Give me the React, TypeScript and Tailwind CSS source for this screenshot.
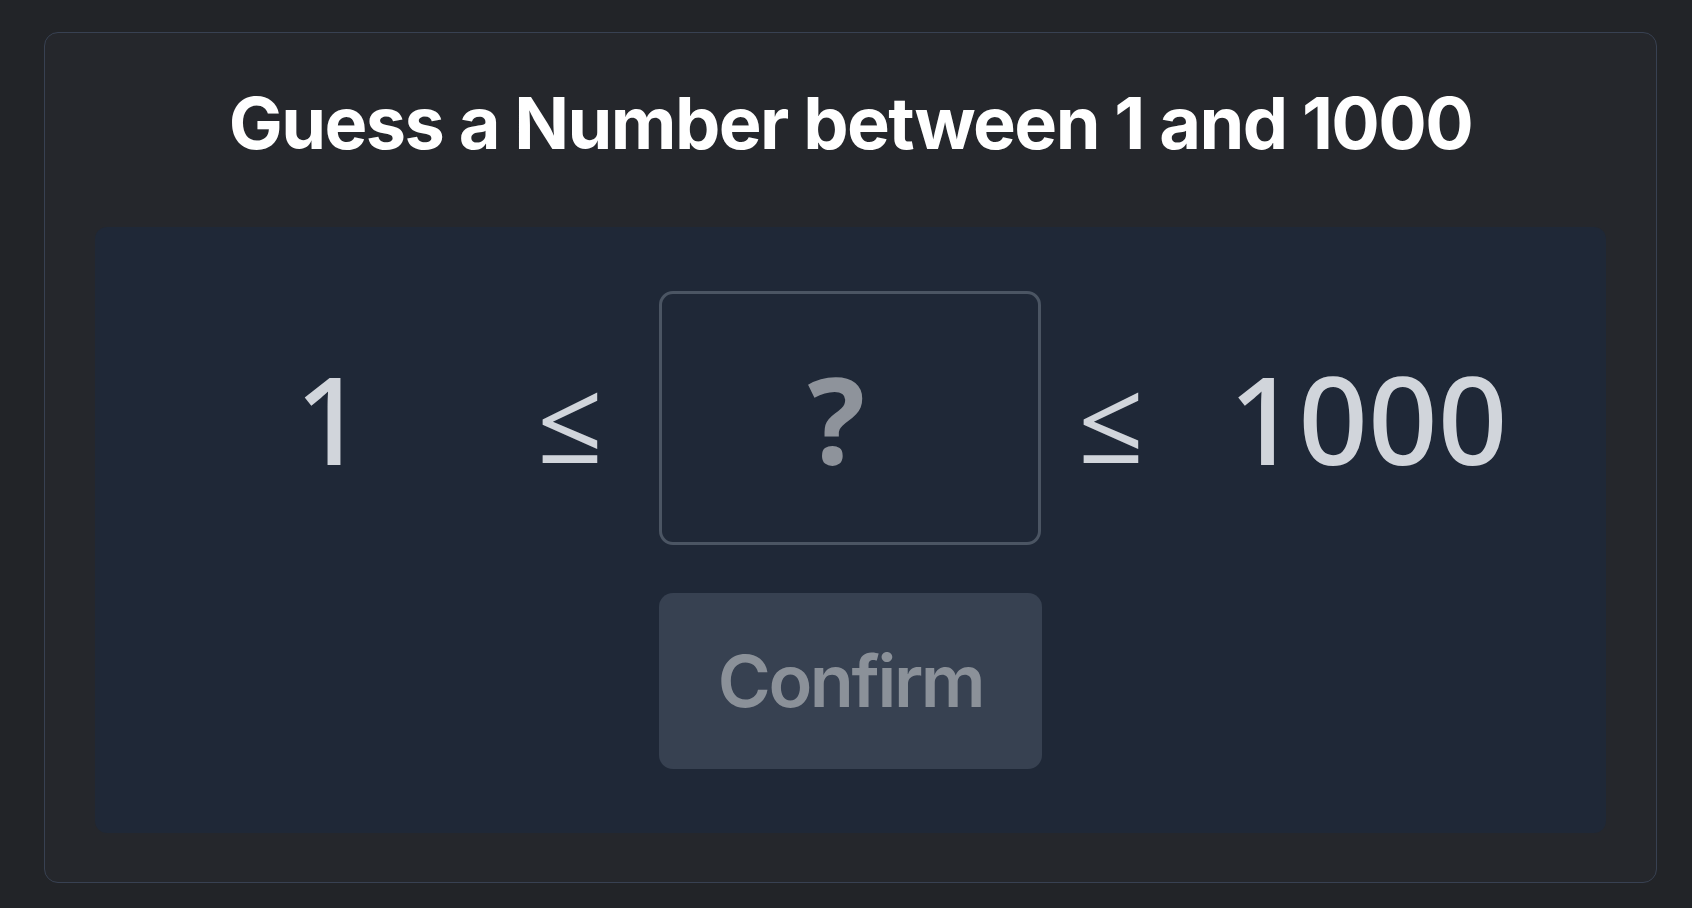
import React from 'react';

export default function App() {
  const numFont = { fontFamily: '"Noto Sans", "Open Sans", sans-serif' };

  return (
    <div
      className="min-h-screen w-full bg-[#222428] pt-[32px] pl-[44px]"
      style={{ fontFamily: 'Inter, "Noto Sans", sans-serif' }}
    >
      <div className="w-[1613px] h-[851px] rounded-[14px] border border-[#384152] bg-[#25272c] px-[50px] pt-[50px]">
        <h1 className="text-center text-[72px] leading-[80px] font-bold text-white tracking-[-1.6px]">
          Guess a Number between 1 and 1000
        </h1>

        <div className="mt-[64px] rounded-[12px] bg-[#1f2837] py-[64px] flex flex-col">
          <div className="flex items-center pl-[85px]" style={numFont}>
            <div className="w-[300px] text-center text-[122px] leading-none font-medium text-[#d1d5db]">1</div>
            <div className="ml-[55px] w-[70px] text-center text-[116px] leading-none font-medium text-[#d1d5db]">≤</div>
            <div className="ml-[54px] w-[382px] h-[254px] rounded-[14px] border-[3px] border-[#4b5563] flex items-center justify-center pr-[28px] text-[120px] leading-none font-bold text-[#8e939b]">
              ?
            </div>
            <div className="ml-[35px] w-[70px] text-center text-[116px] leading-none font-medium text-[#d1d5db]">≤</div>
            <div className="ml-[72px] w-[300px] text-center text-[122px] leading-none font-medium text-[#d1d5db]">1000</div>
          </div>

          <div className="flex justify-center">
            <button className="mt-[48px] w-[383px] h-[176px] rounded-[14px] bg-[#374151] text-[72px] font-semibold tracking-[-2.4px] text-[#8b9199]">
              Confirm
            </button>
          </div>
        </div>
      </div>
    </div>
  );
}
